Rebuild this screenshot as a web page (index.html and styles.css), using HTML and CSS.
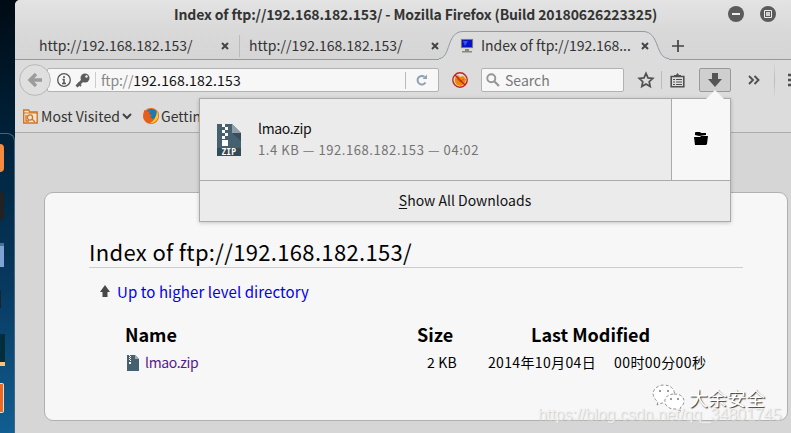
FILE: index.html
```html
<!DOCTYPE html>
<html lang="en">
<head>
<meta charset="utf-8">
<title>Index of ftp://192.168.182.153/</title>
<link rel="stylesheet" href="styles.css">
</head>
<body>
<aside class="desktop">
  <div class="dock">
    <i class="app orange"></i><i class="app dark"></i><i class="app folder"></i><i class="app slim"></i><i class="app teal"></i><i class="app burp"></i>
  </div>
</aside>
<main class="window">
  <header class="titlebar">
    <span class="title">Index of ftp://192.168.182.153/ - Mozilla Firefox (Build 20180626223325)</span>
    <svg class="winbtn" viewBox="0 0 16 16"><circle cx="8" cy="8" r="8" fill="#5b5b5b"/><path d="M4 8h8" stroke="#ededed" stroke-width="2"/></svg>
    <svg class="winbtn" viewBox="0 0 16 16"><circle cx="8" cy="8" r="8" fill="#5b5b5b"/><path d="M4.500 4.500h7v7h-7z" fill="none" stroke="#ededed"/><path d="M6 6h4v4H6z" fill="#d0d0d0"/></svg>
  </header>
  <nav class="tabs">
    <div class="tab"><span class="t-url">http://192.168.182.153/</span><svg class="x" viewBox="0 0 8 8"><path d="M1 1l6 6M7 1L1 7" stroke="#444" stroke-width="2"/></svg></div>
    <div class="tab second"><span class="t-url">http://192.168.182.153/</span><svg class="x" viewBox="0 0 8 8"><path d="M1 1l6 6M7 1L1 7" stroke="#444" stroke-width="2"/></svg></div>
    <div class="tab active">
      <svg class="tabshape" viewBox="0 0 232 30"><path d="M0 30V28.500C12 28.500 7 1.500 24 1.500H204C221 1.500 216 28.500 230 28.500V30Z" fill="#dcdcdc"/><path d="M0 28.500C12 28.500 7 1.500 24 1.500H204C221 1.500 216 28.500 230 28.500" fill="none" stroke="#919ba4"/></svg>
      <svg class="pc" viewBox="0 0 14 15"><path d="M0 0h14v11H0z" fill="#d8d6cc"/><path d="M1.500 1.500h11v8h-11z" fill="#0714c6" stroke="#777"/><path d="M3 3h5L5 8z" fill="#3454ee"/><path d="M5 11h4v2H5zM2 13h10v1.500H2z" fill="#88887f"/></svg>
      <span class="t-active">Index of ftp://192.168...</span><svg class="x" viewBox="0 0 8 8"><path d="M1 1l6 6M7 1L1 7" stroke="#444" stroke-width="2"/></svg>
    </div>
    <svg class="plus" viewBox="0 0 12 12"><path d="M6 0v12M0 6h12" stroke="#444" stroke-width="1.700"/></svg>
  </nav>
  <section class="toolbar">
    <svg class="back" viewBox="0 0 32 32"><circle cx="16" cy="16" r="15.400" fill="#dfdfdf" stroke="#b8b8b8"/><path d="M23 16H12M17 10l-6 6 6 6" fill="none" stroke="#9c9c9c" stroke-width="3.400"/></svg>
    <div class="url">
      <svg class="info" viewBox="0 0 14 14"><circle cx="7" cy="7" r="6.300" fill="none" stroke="#555" stroke-width="1.300"/><path d="M7 3v2M5.500 6.500H7V10M5 10.500h4" fill="none" stroke="#555" stroke-width="1.500"/></svg>
      <svg class="key" viewBox="0 0 15 15"><path d="M1.500 13.500L8 7" stroke="#5d5d5d" stroke-width="3"/><path d="M3 10l3 3" stroke="#5d5d5d" stroke-width="2"/><circle cx="10" cy="5" r="4.500" fill="#5d5d5d"/><circle cx="11.500" cy="3.500" r="1.200" fill="#f5f5f5"/></svg>
      <span class="address"><span class="scheme">ftp://</span>192.168.182.153</span>
      <span class="reload"><svg viewBox="0 0 12 12"><path d="M9.500 8.500A4.300 4.300 0 1 1 8.500 2.800" fill="none" stroke="#8fa0b0" stroke-width="2"/><path d="M6.500 5H11V.5z" fill="#8fa0b0"/></svg></span>
    </div>
    <svg class="noscript" viewBox="0 0 16 16"><path d="M3 6l3-3 2 2 3-1 3 3-1 4-4 3-4-1-2-3z" fill="#ec8700"/><path d="M5 7l3 3 4-3" fill="none" stroke="#c36812"/><circle cx="8" cy="8" r="7.200" fill="none" stroke="#c82020" stroke-width="1.400"/><path d="M3 3l10 10" stroke="#c82020" stroke-width="1.500"/></svg>
    <div class="search"><svg viewBox="0 0 14 14"><circle cx="5.300" cy="5.300" r="4" fill="none" stroke="#969696" stroke-width="1.900"/><path d="M8.500 8.500l4.500 4.500" stroke="#969696" stroke-width="2.200"/></svg><span>Search</span></div>
    <svg class="star" viewBox="0 0 16 16"><path d="M8 1.400l2 4.500 4.800.5-3.600 3.300 1 4.800L8 12l-4.200 2.500 1-4.800L1.200 6.400 6 5.900z" fill="none" stroke="#505050" stroke-width="1.700"/></svg>
    <i class="sep"></i>
    <svg class="clip" viewBox="0 0 15 15"><path d="M1.200 3.500h12.600v10.300H1.200z" fill="none" stroke="#505050" stroke-width="1.600"/><path d="M4 2h2l1.500-2L9 2h2v2H4z" fill="#505050"/><path d="M3 6.500h2M6 6.500h6M3 9h2M6 9h6M3 11.500h2M6 11.500h6" stroke="#505050" stroke-width="1.200"/></svg>
    <div class="download"><svg viewBox="0 0 14 14"><path d="M4 0h6v6h4l-7 8-7-8h4z" fill="#555"/></svg></div>
    <svg class="more" viewBox="0 0 12 10"><path d="M1 1l4 4-4 4M6.500 1l4 4-4 4" fill="none" stroke="#505050" stroke-width="1.900"/></svg>
    <i class="sep end"></i>
    <svg class="menu" viewBox="0 0 14 14"><path d="M0 2h14M0 7h14M0 12h14" stroke="#505050" stroke-width="2.500"/></svg>
  </section>
  <section class="bookmarks">
    <svg class="visited" viewBox="0 0 15 15"><path d="M.7 14V1h5l1 2h7.500v11z" fill="#f6e5d0" stroke="#d07425" stroke-width="1.400"/><path d="M1 4h13" stroke="#d07425"/><circle cx="7" cy="8.500" r="2.600" fill="none" stroke="#d07425" stroke-width="1.300"/><path d="M9 10l3 3M3 6v6h3" fill="none" stroke="#d07425" stroke-width="1.300"/></svg>
    <span class="mv">Most Visited</span>
    <svg class="chev" viewBox="0 0 10 6"><path d="M1 1l4 4 4-4" fill="none" stroke="#444" stroke-width="2"/></svg>
    <svg class="fox" viewBox="0 0 16 16"><circle cx="8" cy="8" r="8" fill="#e86512"/><circle cx="8.500" cy="6.500" r="5.500" fill="#187bb4"/><path d="M1 2l3 2 3-1-1 3 3 1-2 2 3 2 4-2 1-6q2 8-4 12Q3 16 .5 10z" fill="#e85d18"/><path d="M14 3q3 6-1 10-3 3-6 2 6-3 7-12z" fill="#ffc530"/></svg>
    <span>Getting</span>
  </section>
  <section class="page">
    <article class="listing">
      <h1><span>Index of ftp://192.168.182.153/</span></h1>
      <a class="up"><svg viewBox="0 0 10 12"><path d="M5 0l5 7H7.500v5h-5V7H0z" fill="#484848"/></svg><span>Up to higher level directory</span></a>
      <div class="files">
        <b class="name">Name</b><b class="size">Size</b><b class="modified">Last Modified</b>
        <a class="file"><svg viewBox="0 0 12 16"><path d="M0 0h8l4 4v12H0z" fill="#45606e"/><path d="M8 0v4h4z" fill="#9eabb2"/><path d="M2 0h1v1H2zM3 1h1v1H3zM2 2h1v1H2zM3 3h1v1H3zM2 4h1v1H2zM3 5h1v1H3zM2 7h2v2H2z" fill="#fff"/></svg><span class="fname">lmao.zip</span></a>
        <span class="kb">2 KB</span><span class="date">2014年10月04日</span><span class="time">00时00分00秒</span>
      </div>
    </article>
  </section>
</main>
<section class="popup">
  <svg class="arrow" viewBox="0 0 20 10"><path d="M0 10L10 0l10 10z" fill="#f7f7f7"/></svg>
  <div class="item">
    <svg class="zip" viewBox="0 0 24 32"><path d="M0 0h15l9 9v23H0z" fill="#45606e"/><path d="M15 0v9h9z" fill="#91a0a8"/><path d="M15 9h9v8z" fill="#374e5a"/><path d="M0 24h24v8H0z" fill="#344a56"/><path d="M5 0h3v3H5zM8 3h3v3H8zM5 6h3v3H5zM8 9h3v3H8zM5 12h3v3H5zM5 16h6v6H5z" fill="#fff"/><text x="4.500" y="30.700">ZIP</text></svg>
    <div class="details"><span class="fname">lmao.zip</span><span class="meta">1.4 KB — 192.168.182.153 — 04:02</span></div>
  </div>
  <div class="open"><svg viewBox="0 0 14 13"><path d="M1 3V1q0-1 1-1h4l1 1h5v2L5 4z"/><path d="M0 5h6l1-1h7l-1 8-1 1H1z"/></svg></div>
  <div class="all"><span><u>S</u>how All Downloads</span></div>
</section>
<div class="brand">
  <svg viewBox="0 0 31 26"><g fill="#fff" stroke="#777" stroke-width=".8" stroke-dasharray="3 2"><path d="M4 20l1-3C-5 9 2 0 11 0s13 8 9 14q-5 5-11 4z"/><path d="M21 9c12 0 12 10 6 14l1 3-5-2C9 25 8 9 21 9z"/></g><g fill="#777"><circle cx="7" cy="6" r="1"/><circle cx="15" cy="6" r="1"/><circle cx="18" cy="14" r="1"/><circle cx="25" cy="14" r="1"/></g></svg>
  <span>大余安全</span>
</div>
<div class="credit">https://blog.csdn.net/qq_34801745</div>
</body>
</html>
```
FILE: styles.css
```css
* { box-sizing: border-box; }
body {
  margin: 0; width: 791px; height: 433px; overflow: hidden; position: relative;
  display: flex; background: #000b15;
  font: 14px/20px "Noto Sans CJK SC", "Noto Sans", sans-serif; color: #333;
  white-space: nowrap;
}
svg { display: block; flex: none; overflow: visible; }
.desktop { width: 15px; flex: none; padding-top: 133px; background: linear-gradient(#000b14, #00243e 35%, #07385e 65%, #115e91); }
.dock { height: 300px; border: 1px solid #46637b; border-left: 0; border-bottom: 0; border-radius: 0 8px 0 0; padding-top: 10px; display: flex; flex-direction: column; }
.app { display: block; flex: none; }
.orange { width: 4px; height: 28px; background: #f58a40; border-radius: 0 5px 5px 0; }
.dark { width: 4px; height: 28px; margin-top: 20px; background: #222; border-radius: 0 5px 5px 0; }
.folder { width: 4px; height: 24px; margin-top: 23px; background: #7ea2d3; border-top: 3px solid #467296; }
.slim { width: 1px; height: 18px; margin-top: 23px; background: #17252e; }
.teal { width: 5px; height: 32px; margin-top: 26px; background: linear-gradient(#002e3c 87%, #fac17d 87%); }
.burp { width: 4px; height: 30px; margin-top: 17px; background: #ed6820; border: 1px solid #ddd; border-left: 0; border-radius: 0 2px 2px 0; }
.window { width: 776px; display: grid; grid-template-columns: 776px; grid-template-rows: 30px 30px 40px 33px 300px; background: #dcdcdc; border-radius: 5px 0 0; overflow: hidden; }
.titlebar { display: flex; align-items: center; padding: 0 15px 2px 159px; background: linear-gradient(#e3e3e3, #d9d9d9); }
.title { flex: 1; font-weight: 700; letter-spacing: -.13px; margin-top: -1px; }
.winbtn { width: 16px; height: 16px; margin-left: 16px; }
.tabs { display: flex; background: linear-gradient(#d9d9d9, #d5d5d5); border-bottom: 1px solid #999; }
.tab { display: flex; align-items: center; flex: none; width: 225px; padding: 1px 0 0 24px; letter-spacing: .04px; }
.tab .x { width: 8px; height: 8px; margin-top: 1px; }
.t-url { width: 182px; margin-top: -1px; }
.second { width: 207px; padding-left: 9px; margin-top: 5px; margin-bottom: 2px; padding-top: 0; border-left: 1px solid #bbb; }
.second .t-url, .second .x { position: relative; top: -1px; }
.active { width: 216px; padding-left: 14px; position: relative; }
.tabshape { position: absolute; left: -7px; top: 0; width: 232px; height: 30px; }
.pc { width: 14px; height: 15px; position: relative; }
.t-active { width: 160px; margin: -1px 0 0 7px; position: relative; letter-spacing: -.04px; }
.active .x { position: relative; }
.plus { width: 12px; height: 12px; margin: 10px 0 0 10px; position: relative; }
.tab:first-child { width: 224px; }
.toolbar { display: flex; align-items: center; padding-left: 4px; }
.toolbar > * { flex: none; }
.back { width: 32px; height: 32px; position: relative; z-index: 1; }
.url { width: 392px; height: 24px; margin-left: -4px; border: 1px solid #b2b2b2; border-radius: 2px; background: #f7f7f7; display: flex; align-items: center; padding-left: 9px; }
.info { width: 14px; height: 14px; }
.key { width: 15px; height: 15px; margin-left: 4px; }
.address { flex: 1; color: #111; border-left: 1px solid #ccc; margin-left: 5px; padding-left: 5px; line-height: 16px; letter-spacing: .19px; }
.scheme { color: #888; letter-spacing: -.2px; }
.reload { width: 33px; height: 17px; border-left: 1px solid #bbb; display: flex; align-items: center; padding-left: 10px; }
.reload svg { width: 12px; height: 12px; }
.noscript { width: 16px; height: 16px; margin-left: 13px; }
.search { width: 143px; height: 24px; margin-left: 13px; border: 1px solid #b2b2b2; border-radius: 2px; background: #f7f7f7; display: flex; align-items: center; padding-left: 4px; gap: 5px; color: #777; }
.search span { margin-top: -1px; }
.search svg { width: 14px; height: 14px; }
.star { width: 16px; height: 16px; margin-left: 14px; }
.sep { width: 1px; height: 18px; margin-left: 7px; background: #bbb; }
.clip { width: 15px; height: 15px; margin-left: 8px; }
.download { width: 32px; height: 24px; margin-left: 14px; display: grid; place-items: center; border: 1px solid #999; border-radius: 2px; background: #cfcfcf; }
.download svg { width: 14px; height: 14px; }
.more { width: 12px; height: 10px; margin-left: 17px; }
.end { height: 36px; margin-left: 14px; background: linear-gradient(#dcdcdc, #b9b9b9, #dcdcdc); }
.menu { width: 14px; height: 14px; margin-left: 13px; }
.bookmarks { display: flex; align-items: center; padding-left: 8px; border-bottom: 1px solid #acacac; }
.bookmarks span { margin-top: -1px; letter-spacing: .05px; }
.visited { width: 15px; height: 15px; margin-right: 3px; }
.mv { width: 81px; }
.chev { width: 10px; height: 6px; }
.fox { width: 16px; height: 16px; margin: 0 2px 0 11px; }
.page { background: #d6d6d6; padding: 59px 3px 0 29px; }
.listing { height: 229px; border: 1px solid #b0b0b0; border-radius: 9px; background: #f7f7f7; padding: 43px 44px 0; color: #000; }
h1 { font-size: 22px; line-height: 30px; height: 32px; margin: 0; font-weight: 400; border-bottom: 1px solid #ccc; letter-spacing: .33px; }
.up { display: flex; align-items: center; gap: 7px; height: 21px; margin: 14px 0 0 11px; font-size: 15px; color: #0000ee; letter-spacing: .09px; }
.up svg { width: 10px; height: 12px; margin-top: -3px; }
.up span { margin-top: -1px; }
.files { display: grid; grid-template-columns: 292px 71px 126px 120px; grid-template-rows: 28px 27px; align-items: center; margin: 17px 0 0 36px; }
.files b { font-size: 18px; }
.modified { grid-column: 3 / 5; padding-left: 43px; }
.file { display: flex; align-items: center; gap: 6px; padding-left: 2px; color: #551a8b; }
.file svg { width: 12px; height: 16px; margin-top: 2px; }
.fname { letter-spacing: -.35px; }
.kb { padding-left: 10px; letter-spacing: .2px; }
.date { letter-spacing: .35px; }
.time { letter-spacing: .42px; }
.popup { position: absolute; left: 199px; top: 98px; width: 532px; height: 124px; border: 1px solid #aaa; background: #ebebeb; box-shadow: 0 1px 4px #0003; display: grid; grid-template-columns: 471px 59px; grid-template-rows: 81px 41px; color: #111; }
.arrow { position: absolute; left: 505px; top: -9px; width: 20px; height: 10px; }
.item { display: flex; align-items: center; padding-left: 17px; gap: 17px; }
.zip { width: 24px; height: 32px; }
.zip text { font: 700 8px "DejaVu Sans Mono", monospace; fill: #fff; }
.details { display: flex; flex-direction: column; gap: 2px; margin-top: -2px; }
.meta { color: #737373; font-size: 13px; letter-spacing: .57px; }
.open { border-left: 1px solid #aaa; background: #f7f7f7; display: grid; place-items: center; }
.open svg { width: 14px; height: 13px; margin-top: -2px; }
.all { grid-column: 1 / 3; border-top: 1px solid #aaa; text-align: center; padding-top: 9px; }
.all u { text-underline-offset: 2px; }
.brand { position: absolute; left: 653px; top: 384px; display: flex; align-items: center; gap: 5px; font-size: 19px; line-height: 28px; color: #fff; text-shadow: 1px 1px 1px #333; }
.brand svg { width: 31px; height: 26px; }
.credit { position: absolute; left: 538px; top: 405px; font: 16px/20px "Liberation Sans", sans-serif; letter-spacing: -.07px; color: #f2f2f2e0; text-shadow: 1px 1px 1px #ccc; }
```
